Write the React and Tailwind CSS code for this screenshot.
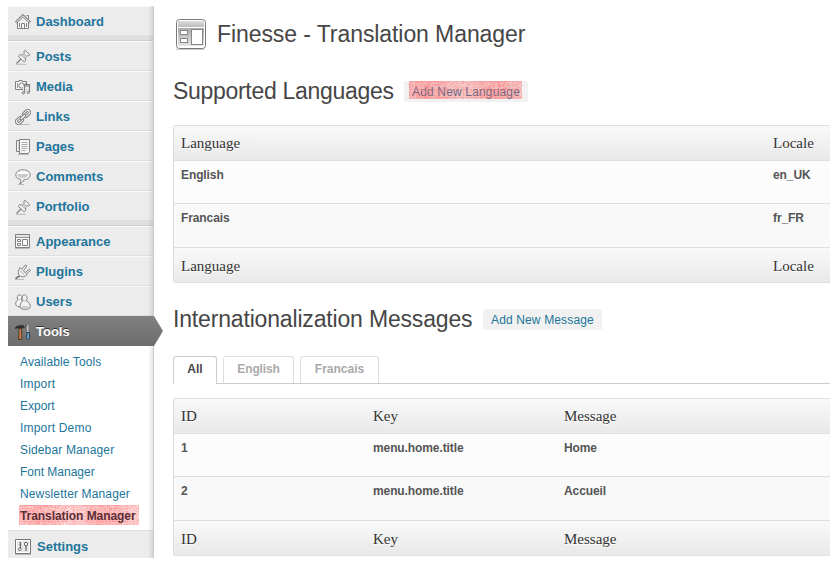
import React from "react";

const P = { width: 16, height: 16, viewBox: "0 0 16 16", fill: "none", stroke: "#808080", strokeWidth: 1, className: "mt-[2px] shrink-0" };

const Pin = () => (
  <svg {...P}>
    <path d="M0.5 15.300H11" stroke="#bbb" />
    <path d="M1.500 14.500L6 10" strokeWidth="1.300" />
    <path d="M9.800 1.200l5 4.600-1.200 1.200-1.200-.4-2 2 .4 2.800-1.600 1.400-6-5.600 1.400-1.400 2.800.2 2-2-.6-1.400z" fill="#f4f4f4" />
    <path d="M6.500 6.800l3.200 3L12 7.200 9 4.500z" fill="#ccc" stroke="#aaa" strokeWidth=".6" />
  </svg>
);

const icons = {
  Dashboard: (
    <svg {...P}>
      <path d="M2.500 8v6.500h11V8" fill="#f6f6f6" />
      <path d="M11.500 1.500h2V5" />
      <path d="M.8 8.600L8 1.600l7.200 7" strokeWidth="2.600" />
      <path d="M1.200 8.300L8 1.800l6.800 6.500" stroke="#fafafa" strokeWidth="1" />
      <path d="M6.500 14.500v-5h3v5M4.500 9v4M11.500 9v4" />
    </svg>
  ),
  Posts: <Pin />,
  Portfolio: <Pin />,
  Media: (
    <svg {...P}>
      <path d="M2 2.500h2v-1h3v1h4.500v8H.5v-8z" fill="#f6f6f6" />
      <circle cx="6.500" cy="6.500" r="2.600" />
      <path d="M2.500 4v5M10.500 4v1" stroke="#999" />
      <path d="M9.500 14V8.500h5V13" stroke="#eee" strokeWidth="3" />
      <path d="M9.500 13.500v-8h5v7.500M9.500 7h5" strokeWidth="1.200" />
      <circle cx="8.300" cy="13.800" r="1.200" fill="#ddd" />
      <circle cx="13.300" cy="13.400" r="1.200" fill="#ddd" />
    </svg>
  ),
  Links: (
    <svg {...P}>
      <path d="M4 15.500h11" stroke="#bbb" />
      <g transform="rotate(-45 8 8)">
        <rect x="-1.500" y="5" width="9" height="6" rx="3" fill="#f2f2f2" />
        <rect x=".8" y="7" width="4.400" height="2" rx="1" />
        <rect x="8.500" y="5" width="9" height="6" rx="3" fill="#f2f2f2" />
        <rect x="10.800" y="7" width="4.400" height="2" rx="1" />
        <rect x="4.500" y="6.700" width="7" height="2.600" rx="1.300" fill="#fafafa" />
      </g>
    </svg>
  ),
  Pages: (
    <svg {...P}>
      <path d="M1.500 1.500h5v11h-5z" fill="#f6f6f6" />
      <path d="M3 4h1M3 6h1M3 8h1M3 10h1" stroke="#aaa" />
      <path d="M4.500 .5h10v12l-1.500 2h-8.500z" fill="#f6f6f6" />
      <path d="M6.500 3.500h6M6.500 5.500h6M6.500 7.500h6M6.500 9.500h6M6.500 11.500h4" stroke="#aaa" />
      <path d="M3 15.500h11" stroke="#bbb" />
    </svg>
  ),
  Comments: (
    <svg {...P}>
      <path d="M3 15.500h6" stroke="#bbb" />
      <path d="M8 .8c4 0 7.200 2 7.200 5s-2.900 4.900-6.400 5c-.6 1.700-2.200 3.500-4.200 4 1-1.200 1.300-2.700 1.100-4.300C2.800 9.800.8 8.300.8 5.800.8 2.800 4 .8 8 .8z" fill="#fafafa" />
      <path d="M2.500 5h11c0 2.600-2.500 4.200-5.500 4.200S2.500 7.600 2.500 5z" fill="#ccc" stroke="none" />
    </svg>
  ),
  Appearance: (
    <svg {...P}>
      <path d="M.5 .5h14v13H.5z" fill="#fafafa" />
      <path d="M1 2.500h13" stroke="#ddd" strokeWidth="2" />
      <path d="M1 3.500h13" stroke="#999" />
      <path d="M2.500 5.500h3v2h-3zM2.500 9.500h3v2h-3zM7.500 5.500h5v6h-5z" />
      <path d="M0 14.500h15" stroke="#bbb" />
    </svg>
  ),
  Plugins: (
    <svg {...P}>
      <path d="M0 15.500h9" stroke="#bbb" />
      <path d="M.8 14.800c1-2 1.800-.8 3.700-3" strokeWidth="2" />
      <path d="M5.200 3.600l7 7-2 1.600c-2 1-4.500.8-5.800-.6s-1.500-3.800-.6-5.800z" fill="#f3f3f3" />
      <path d="M7 5.200L10.500 .8l1.300 1-3.200 4.800M10 8.800l4.400-3.600 1 1.300-4.200 3.400" fill="#fff" />
      <path d="M5 6.500l4.500 4.600" stroke="#aaa" />
    </svg>
  ),
  Users: (
    <svg {...P}>
      <path d="M.8 10.500c-.4-2 .6-3.600 2-4.400C1.600 3.500 2.500.8 4.600.8S7.600 3.500 6.500 6.100L8 8.500l-2 4.500C3.500 13 1 12.500.8 10.500z" fill="#f6f6f6" />
      <path d="M7.700 6.800C6.600 3.800 7.500.8 9.600.8s3 3 1.900 6c2.300 1 4 3.800 3.800 6-.2 1.700-2 2.500-5.300 2.500s-5-.9-5-2.500c0-2.600 1.200-5 2.700-6z" fill="#f2f2f2" />
      <path d="M8 5.500c1 .8 2.300.8 3.300 0v2H8zM6.500 12h7v2h-7z" fill="#ccc" stroke="none" />
      <path d="M3 5c.8.600 2 .6 2.800 0" stroke="#bbb" />
    </svg>
  ),
  Tools: (
    <svg {...P}>
      <path d="M0 4.500C1 2 3 1.200 8.500 1.500l1 2.300-3 .2-3-.1L0 4.500z" fill="#333" stroke="#222" strokeWidth=".5" />
      <path d="M4 4.500h2.600l.4 11H3.600z" fill="#c87a48" stroke="#3a2a20" strokeWidth=".8" />
      <path d="M12.800 1v8" stroke="#ccc" strokeWidth="1.300" />
      <path d="M12 8.500h2.300l.5 5c0 2.500-3.400 2.500-3.400 0z" fill="#6c9fc4" stroke="#223444" strokeWidth=".9" />
      <path d="M10 2l1.500-.8" stroke="#333" />
    </svg>
  ),
  Settings: (
    <svg {...P}>
      <path d="M.5 .5h15v14H.5z" fill="#e8e8e8" stroke="#777" />
      <path d="M1.500 1.500h13v12h-13z" stroke="#fff" />
      <path d="M5.500 3v6M11 7v5" stroke="#666" strokeWidth="1.200" />
      <circle cx="4.800" cy="10.300" r="1.300" fill="#fff" stroke="#666" />
      <circle cx="11" cy="5" r="1.700" fill="#fff" stroke="#666" />
      <path d="M4 3.500h2M4 5.500h1" stroke="#888" />
      <path d="M0 15.500h16" stroke="#bbb" />
    </svg>
  ),
};

function Item({ name }) {
  return (
    <div className="flex h-[30px] items-center border-t border-b border-t-[#f9f9f9] border-b-[#dfdfdf] bg-[#ececec] pl-[7px]">
      {icons[name]}
      <span className="ml-[5px] pt-[2px] text-[13px] leading-[18px] font-bold text-[#21759b]">{name}</span>
    </div>
  );
}

const Separator = () => <div className="h-[5px] border-b border-[#cfcfcf] bg-[#dfdfdf]" />;

/* Marker scribble with an uneven, speckled ink */
function Marker({ w, h, className }) {
  const cells = [];
  let s = 7;
  for (let y = 0; y < h; y += 1) {
    for (let x = 0; x < w; x += 1) {
      s = (s * 16807) % 2147483647;
      const r = s / 2147483647;
      const band = Math.sin(x / 11) * 0.07 + (x % 18 === 0 || y % 8 === 0 ? 0.1 : 0);
      cells.push(<rect key={x + "-" + y} x={x} y={y} width="1" height="1" fill="#ff5555" opacity={(0.24 + r * 0.28 + band).toFixed(2)} />);
    }
  }
  return (
    <svg width={w} height={h} className={className} shapeRendering="crispEdges">
      {cells}
    </svg>
  );
}

const submenu = [
  ["Available Tools", "tracking-[0.12px]"],
  ["Import", "tracking-[0.2px]"],
  ["Export", "tracking-[0px]"],
  ["Import Demo", "tracking-[0.2px]"],
  ["Sidebar Manager", "tracking-[0.15px]"],
  ["Font Manager", "tracking-[0px]"],
  ["Newsletter Manager", "tracking-[0.14px]"],
];

function Sidebar() {
  return (
    <nav className="relative mt-[6px] h-[552px] w-[146px] shrink-0 overflow-visible">
      <div className="h-[552px] overflow-hidden">
        <Item name="Dashboard" />
        <Separator />
        {["Posts", "Media", "Links", "Pages", "Comments", "Portfolio"].map((n) => <Item key={n} name={n} />)}
        <Separator />
        {["Appearance", "Plugins", "Users"].map((n) => <Item key={n} name={n} />)}
        <div className="flex h-[30px] items-center bg-linear-to-b from-[#808080] to-[#6d6d6d] pl-[7px]">
          {icons.Tools}
          <span className="ml-[5px] pt-[2px] text-[13px] leading-[18px] font-bold text-white [text-shadow:0_-1px_0_#333]">Tools</span>
        </div>
        <div className="h-[184px] pt-[5px] pl-3 text-[12px] leading-[22px] whitespace-nowrap text-[#21759b]">
          {submenu.map(([t, c]) => <div key={t} className={c}>{t}</div>)}
          <div className="relative font-bold text-[#333]">
            <Marker w={120} h={20} className="absolute top-0 -left-px" />
            <span className="relative tracking-[-0.06px] text-[#5a2f38]">Translation Manager</span>
          </div>
        </div>
        <div className="flex h-[30px] items-center border-t border-[#dfdfdf] bg-[#ececec] pl-[7px]">
          {icons.Settings}
          <span className="ml-[6px] pt-[2px] text-[13px] leading-[18px] font-bold text-[#21759b]">Settings</span>
        </div>
      </div>
      <div className="absolute top-0 right-0 h-[310px] w-[6px] border-r border-[#ccc] bg-linear-to-r from-transparent to-black/10" />
      <div className="absolute top-[340px] right-0 h-[212px] w-[6px] border-r border-[#ccc] bg-linear-to-r from-transparent to-black/10" />
      <svg width="9" height="30" className="absolute top-[310px] left-[146px]">
        <defs>
          <linearGradient id="arrow" x1="0" y1="0" x2="0" y2="1">
            <stop offset="0" stopColor="#808080" />
            <stop offset="1" stopColor="#6d6d6d" />
          </linearGradient>
        </defs>
        <path d="M0 0L9 15L0 30z" fill="url(#arrow)" />
      </svg>
    </nav>
  );
}

function Table({ cols, rows }) {
  const head = "flex items-center bg-linear-to-b from-[#f9f9f9] to-[#e9e9e9] font-['Liberation_Serif',serif] text-[15px] text-[#333] [text-shadow:0_1px_0_#fff]";
  const cells = (r) => r.map((c, i) => <div key={i} className={"shrink-0 pl-[7px] " + cols[i][1]}>{c}</div>);
  return (
    <div className="overflow-hidden rounded-l-[3px] border border-r-0 border-[#dfdfdf]">
      <div className={head + " h-[35px] border-b border-[#dfdfdf]"}>{cells(cols.map((c) => c[0]))}</div>
      <div className="flex h-[43px] border-b border-[#dfdfdf] bg-[#fcfcfc] pt-[5px] text-[12px] leading-[18px] font-bold tracking-[-0.1px] text-[#555]">{cells(rows[0])}</div>
      <div className="flex h-[44px] border-b border-[#dfdfdf] bg-[#f9f9f9] pt-[5px] text-[12px] leading-[18px] font-bold tracking-[-0.1px] text-[#555]">{cells(rows[1])}</div>
      <div className={head + " h-[34px] pt-[3px]"}>{cells(cols.map((c) => c[0]))}</div>
    </div>
  );
}

export default function App() {
  return (
    <div className="flex h-[566px] w-[838px] overflow-hidden bg-white pl-2 font-['Liberation_Sans',Arial,sans-serif] whitespace-nowrap">
      <Sidebar />
      <main className="ml-[19px] w-[657px] overflow-hidden">
        <div className="flex h-[68px] items-center">
          <svg width="34" height="34" viewBox="0 0 34 34" fill="none">
            <defs>
              <linearGradient id="panel" x1="0" y1="0" x2="0" y2="1">
                <stop offset="0" stopColor="#aaa" />
                <stop offset="1" stopColor="#e4e4e4" />
              </linearGradient>
              <linearGradient id="bar" x1="0" y1="0" x2="0" y2="1">
                <stop offset="0" stopColor="#ddd" />
                <stop offset="1" stopColor="#bbb" />
              </linearGradient>
            </defs>
            <path d="M3 32.500h29" stroke="#ccc" />
            <rect x="3.500" y="2.500" width="29" height="29" rx="3" fill="#fff" stroke="#777" />
            <rect x="5" y="4" width="26" height="6" fill="url(#bar)" />
            <rect x="5" y="11" width="26" height="18" fill="url(#panel)" />
            <rect x="7.500" y="13.500" width="7" height="4" fill="#fff" stroke="#888" />
            <rect x="7.500" y="21.500" width="7" height="4" fill="#fff" stroke="#888" />
            <rect x="18.500" y="12.500" width="11" height="15" fill="#fff" stroke="#888" />
          </svg>
          <h1 className="ml-[10px] text-[23px] leading-[29px] tracking-[-0.08px] text-[#464646]">Finesse - Translation Manager</h1>
        </div>
        <div className="flex h-[57px] pt-[9px]">
          <h2 className="w-[231px] text-[23px] leading-[29px] tracking-[-0.3px] text-[#464646]">Supported Languages</h2>
          <div className="relative mt-[4px] h-[21px] w-[124px] rounded-[3px] bg-[#f1f1f1] pl-2 text-[12px] leading-[22px] tracking-[0.16px] text-[#21759b]">
            Add New Language
            <Marker w={113} h={18} className="absolute top-0 left-[5px]" />
          </div>
        </div>
        <Table
          cols={[["Language", "w-[592px]"], ["Locale", "w-[80px]"]]}
          rows={[["English", "en_UK"], ["Francais", "fr_FR"]]}
        />
        <div className="flex h-[73px] pt-[22px]">
          <h2 className="w-[310px] text-[23px] leading-[29px] tracking-[-0.17px] text-[#464646]">Internationalization Messages</h2>
          <div className="mt-[4px] h-[21px] w-[119px] rounded-[3px] bg-[#f1f1f1] pl-2 text-[12px] leading-[22px] tracking-[0.14px] text-[#21759b]">
            Add New Message
          </div>
        </div>
        <div className="flex h-[28px] items-end border-b border-[#ccc] text-center text-[12px] leading-[25px] font-bold text-[#aaa]">
          <div className="-mb-px h-[28px] w-[44px] rounded-t-[3px] border border-b-0 border-[#ccc] bg-white text-[#464646]">All</div>
          <div className="ml-[6px] h-[27px] w-[71px] rounded-t-[3px] border border-b-0 border-[#dfdfdf] tracking-[-0.15px]">English</div>
          <div className="ml-[6px] h-[27px] w-[79px] rounded-t-[3px] border border-b-0 border-[#dfdfdf]">Francais</div>
        </div>
        <div className="h-[14px]" />
        <Table
          cols={[["ID", "w-[192px]"], ["Key", "w-[191px]"], ["Message", "w-[270px]"]]}
          rows={[["1", "menu.home.title", "Home"], ["2", "menu.home.title", "Accueil"]]}
        />
      </main>
    </div>
  );
}
